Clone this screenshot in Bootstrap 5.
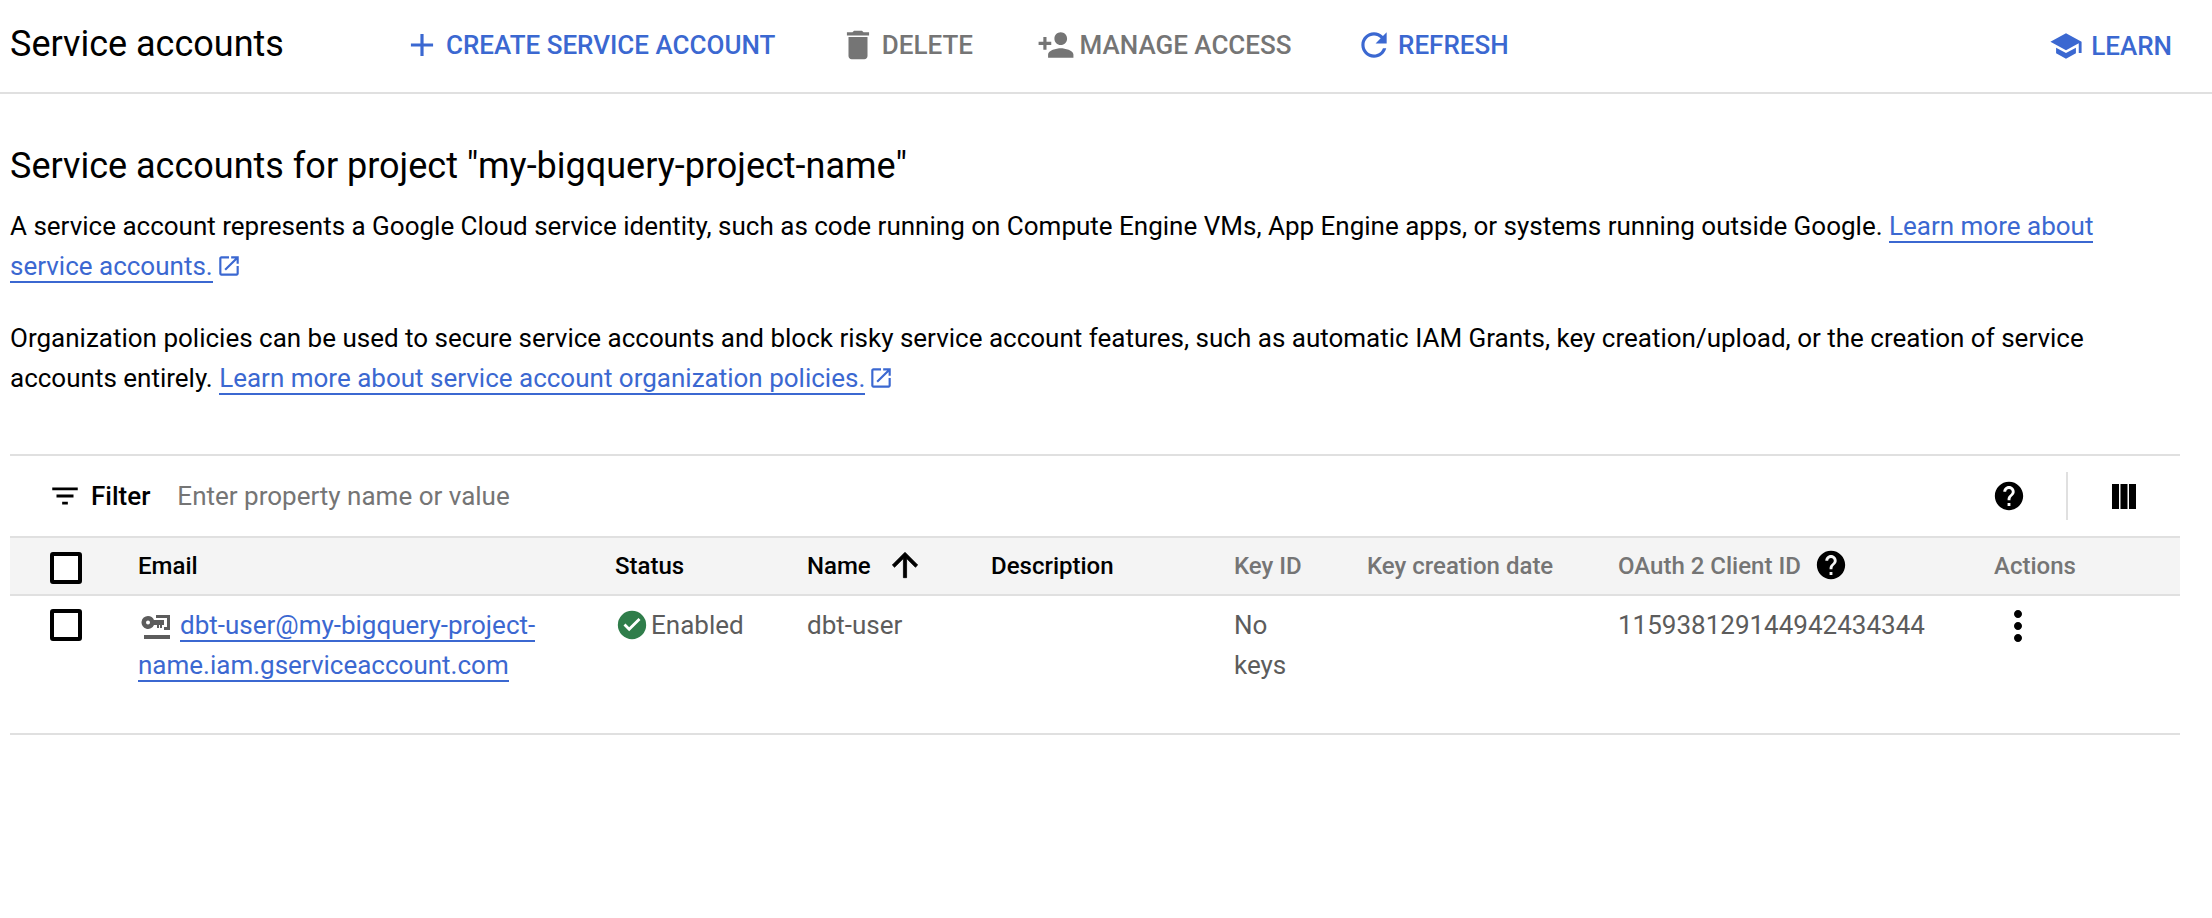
<!DOCTYPE html>
<html lang="en">
<head>
    <meta charset="UTF-8">
    <meta name="viewport" content="width=device-width, initial-scale=1.0">
    <title>Service accounts</title>
    <link href="https://cdn.jsdelivr.net/npm/bootstrap@5.3.0/dist/css/bootstrap.min.css" rel="stylesheet">
    <style>
        body {
            font-family: Roboto, "Liberation Sans", sans-serif;
            font-size: 26px;
            line-height: 40px;
            color: #000;
        }
        .top-bar {
            height: 94px;
            border-bottom: 2px solid #e0e0e0;
            padding: 0 40px 2px 10px;
        }
        .top-title {
            font-size: 36px;
            font-weight: 400;
            margin: 0;
            width: 393px;
        }
        .tool-btn {
            font-size: 26px;
            font-weight: 500;
            line-height: 40px;
            padding: 0;
            border: 0;
            gap: 5px;
            background: none;
            text-transform: uppercase;
        }
        .tool-blue { color: #3b68d1; }
        .tool-gray { color: #757575; }
        .tool-btn svg { width: 38px; height: 38px; fill: currentColor; }
        .tool-btn .learn-icon { width: 34px; height: 34px; margin-right: 3px; }
        .tool-gap { margin-right: 63.5px; }
        .learn-btn { padding-top: 2px; }
        .page-body { padding: 0 32px 0 10px; }
        .page-heading {
            font-size: 36px;
            font-weight: 400;
            line-height: 44px;
            margin: 50px 0 18px;
        }
        .intro-text { margin: 0 0 32px; }
        .doc-link {
            color: #3b68d1;
            text-decoration: none;
            border-bottom: 2px solid #3b68d1;
        }
        .ext-icon { width: 26px; height: 26px; fill: #3b68d1; margin-left: 3px; vertical-align: -4px; }
        .filter-bar {
            height: 82px;
            margin-top: 56px;
            border-top: 2px solid #e0e0e0;
            padding: 0 44px 0 38px;
        }
        .filter-label { font-weight: 500; margin: 0 27px 0 9px; }
        .filter-input {
            border: 0;
            outline: 0;
            padding: 0;
            font: inherit;
            color: #757575;
            width: 500px;
        }
        .filter-input::placeholder { color: #757575; opacity: 1; }
        .filter-sep { width: 2px; height: 48px; background: #e0e0e0; margin: 0 44px 0 40px; }
        .accounts-table {
            table-layout: fixed;
            width: 100%;
            margin: 0;
        }
        .accounts-table th {
            background: #f4f4f4;
            height: 58px;
            padding: 0;
            font-size: 24px;
            font-weight: 500;
            vertical-align: middle;
            border-top: 2px solid #e0e0e0;
            border-bottom: 2px solid #e0e0e0;
            box-shadow: none;
            color: #000;
        }
        .accounts-table th.dim { color: #757575; }
        .accounts-table td {
            height: 139px;
            padding: 9px 0 0 0;
            font-size: 26px;
            vertical-align: top;
            color: #5c5c5c;
            border-bottom: 2px solid #e0e0e0;
            box-shadow: none;
        }
        .accounts-table .c-check { width: 128px; padding-left: 40px; }
        .c-email { width: 477px; }
        .c-status { width: 192px; }
        .c-name { width: 184px; }
        .c-desc { width: 243px; }
        .c-key { width: 133px; }
        .accounts-table td.c-key { padding-right: 60px; }
        .c-date { width: 251px; }
        .c-oauth { width: 376px; }
        .tick-box {
            width: 32px;
            height: 32px;
            margin: 0;
            border: 4px solid #000;
            border-radius: 3px;
            display: block;
            appearance: none;
            background: #fff;
        }
        th .tick-box { margin-top: 3px; }
        td .tick-box { margin-top: 4px; }
        .sort-icon { width: 38px; height: 38px; vertical-align: -10px; margin-left: 15px; }
        .help-icon { width: 34px; height: 34px; vertical-align: -8px; margin-left: 13px; }
        .status-icon { width: 34px; height: 34px; vertical-align: -8px; margin-right: 2px; }
        .acct-icon { width: 32px; height: 32px; vertical-align: -9px; margin: 0 7px 0 3px; fill: #5c5c5c; }
        .more-icon { width: 48px; height: 48px; margin-top: -3px; display: block; }
    </style>
</head>
<body>
    <div class="top-bar d-flex align-items-center">
        <h1 class="top-title">Service accounts</h1>
        <button class="btn tool-btn tool-blue tool-gap d-flex align-items-center" type="button">
            <svg viewBox="0 0 24 24"><path d="M19 13h-6v6h-2v-6H5v-2h6V5h2v6h6v2z"/></svg>
            Create service account
        </button>
        <button class="btn tool-btn tool-gray tool-gap d-flex align-items-center" type="button">
            <svg viewBox="0 0 24 24"><path d="M6 19c0 1.1.9 2 2 2h8c1.1 0 2-.9 2-2V7H6v12zM19 4h-3.5l-1-1h-5l-1 1H5v2h14V4z"/></svg>
            Delete
        </button>
        <button class="btn tool-btn tool-gray tool-gap d-flex align-items-center" type="button">
            <svg viewBox="0 0 24 24"><path d="M15 12c2.21 0 4-1.79 4-4s-1.79-4-4-4-4 1.79-4 4 1.79 4 4 4zm-9-2V7H4v3H1v2h3v3h2v-3h3v-2H6zm9 4c-2.67 0-8 1.34-8 4v2h16v-2c0-2.66-5.33-4-8-4z"/></svg>
            Manage access
        </button>
        <button class="btn tool-btn tool-blue d-flex align-items-center" type="button">
            <svg viewBox="0 0 24 24"><path d="M17.65 6.35C16.2 4.9 14.21 4 12 4c-4.42 0-7.99 3.58-7.99 8s3.57 8 7.99 8c3.73 0 6.84-2.55 7.73-6h-2.08c-.82 2.33-3.04 4-5.65 4-3.31 0-6-2.69-6-6s2.69-6 6-6c1.66 0 3.14.69 4.22 1.78L13 11h7V4l-2.35 2.35z"/></svg>
            Refresh
        </button>
        <button class="btn tool-btn tool-blue learn-btn ms-auto d-flex align-items-center" type="button">
            <svg class="learn-icon" viewBox="0 0 24 24"><path d="M5 13.18v4L12 21l7-3.82v-4L12 17l-7-3.82zM12 3L1 9l11 6 9-4.91V17h2V9L12 3z"/></svg>
            Learn
        </button>
    </div>

    <div class="page-body">
        <h2 class="page-heading">Service accounts for project "my-bigquery-project-name"</h2>
        <p class="intro-text">A service account represents a Google Cloud service identity, such as code running on Compute Engine VMs, App Engine apps, or systems running outside Google. <a class="doc-link" href="#">Learn more about service accounts.</a><svg class="ext-icon" viewBox="0 0 24 24"><path d="M19 19H5V5h7V3H5c-1.11 0-2 .9-2 2v14c0 1.1.89 2 2 2h14c1.1 0 2-.9 2-2v-7h-2v7zM14 3v2h3.59l-9.83 9.83 1.41 1.41L19 6.41V10h2V3h-7z"/></svg></p>
        <p class="intro-text">Organization policies can be used to secure service accounts and block risky service account features, such as automatic IAM Grants, key creation/upload, or the creation of service accounts entirely. <a class="doc-link" href="#">Learn more about service account organization policies.</a><svg class="ext-icon" viewBox="0 0 24 24"><path d="M19 19H5V5h7V3H5c-1.11 0-2 .9-2 2v14c0 1.1.89 2 2 2h14c1.1 0 2-.9 2-2v-7h-2v7zM14 3v2h3.59l-9.83 9.83 1.41 1.41L19 6.41V10h2V3h-7z"/></svg></p>

        <div class="filter-bar d-flex align-items-center">
            <svg width="34" height="34" viewBox="0 0 24 24"><path d="M10 18h4v-2h-4v2zM3 6v2h18V6H3zm3 7h12v-2H6v2z"/></svg>
            <span class="filter-label">Filter</span>
            <input class="filter-input" type="text" placeholder="Enter property name or value">
            <svg class="ms-auto" width="34" height="34" viewBox="0 0 24 24"><path d="M12 2C6.48 2 2 6.48 2 12s4.48 10 10 10 10-4.48 10-10S17.52 2 12 2zm1 17h-2v-2h2v2zm2.07-7.75l-.9.92C13.45 12.9 13 13.5 13 15h-2v-.5c0-1.1.45-2.1 1.17-2.83l1.24-1.26c.37-.36.59-.86.59-1.41 0-1.1-.9-2-2-2s-2 .9-2 2H8c0-2.21 1.79-4 4-4s4 1.79 4 4c0 .88-.36 1.68-.93 2.25z"/></svg>
            <span class="filter-sep"></span>
            <svg width="24" height="25" viewBox="0 0 24 25"><path d="M0 0h7v25H0zM8.500 0h7v25h-7zM17 0h7v25h-7z"/></svg>
        </div>

        <table class="table accounts-table">
            <thead>
                <tr>
                    <th class="c-check"><input class="tick-box" type="checkbox" aria-label="Select all"></th>
                    <th class="c-email">Email</th>
                    <th class="c-status">Status</th>
                    <th class="c-name">Name<svg class="sort-icon" viewBox="0 0 24 24"><path d="M4 12l1.41 1.41L11 7.83V20h2V7.83l5.58 5.59L20 12l-8-8-8 8z" stroke="#000" stroke-width=".5"/></svg></th>
                    <th class="c-desc">Description</th>
                    <th class="c-key dim">Key ID</th>
                    <th class="c-date dim">Key creation date</th>
                    <th class="c-oauth dim">OAuth 2 Client ID<svg class="help-icon" viewBox="0 0 24 24"><path d="M12 2C6.48 2 2 6.48 2 12s4.48 10 10 10 10-4.48 10-10S17.52 2 12 2zm1 17h-2v-2h2v2zm2.07-7.75l-.9.92C13.45 12.9 13 13.5 13 15h-2v-.5c0-1.1.45-2.1 1.17-2.83l1.24-1.26c.37-.36.59-.86.59-1.41 0-1.1-.9-2-2-2s-2 .9-2 2H8c0-2.21 1.79-4 4-4s4 1.79 4 4c0 .88-.36 1.68-.93 2.25z"/></svg></th>
                    <th class="dim">Actions</th>
                </tr>
            </thead>
            <tbody>
                <tr>
                    <td class="c-check"><input class="tick-box" type="checkbox" aria-label="Select row"></td>
                    <td><svg class="acct-icon" viewBox="0 0 32 32"><path fill-rule="evenodd" d="M7 5a6.500 6.500 0 0 1 6 4h10v5h-2v3h-2v-3h-1v3h-2v-3h-3a6.500 6.500 0 1 1-6-9zm0 4.500a2 2 0 1 0 0 4 2 2 0 0 0 0-4zM15 4h14v15h-6v-3h3V7H15zM3 24h26v4H3z"/></svg><a class="doc-link" href="#">dbt-user@my-bigquery-project-name.iam.gserviceaccount.com</a></td>
                    <td><svg class="status-icon" viewBox="0 0 24 24"><circle cx="12" cy="12" r="10" fill="#2f7d4a"/><path fill="#fff" d="M10 16.400l-4-4 1.400-1.400 2.600 2.600 6.600-6.600 1.400 1.400z"/></svg>Enabled</td>
                    <td>dbt-user</td>
                    <td></td>
                    <td class="c-key">No keys</td>
                    <td></td>
                    <td>115938129144942434344</td>
                    <td><svg class="more-icon" viewBox="0 0 24 24"><path d="M12 8c1.100 0 2-.9 2-2s-.9-2-2-2-2 .9-2 2 .9 2 2 2zm0 2c-1.100 0-2 .9-2 2s.9 2 2 2 2-.9 2-2-.9-2-2-2zm0 6c-1.100 0-2 .9-2 2s.9 2 2 2 2-.9 2-2-.9-2-2-2z"/></svg></td>
                </tr>
            </tbody>
        </table>
    </div>
    <script src="https://cdn.jsdelivr.net/npm/bootstrap@5.3.0/dist/js/bootstrap.bundle.min.js"></script>
</body>
</html>
